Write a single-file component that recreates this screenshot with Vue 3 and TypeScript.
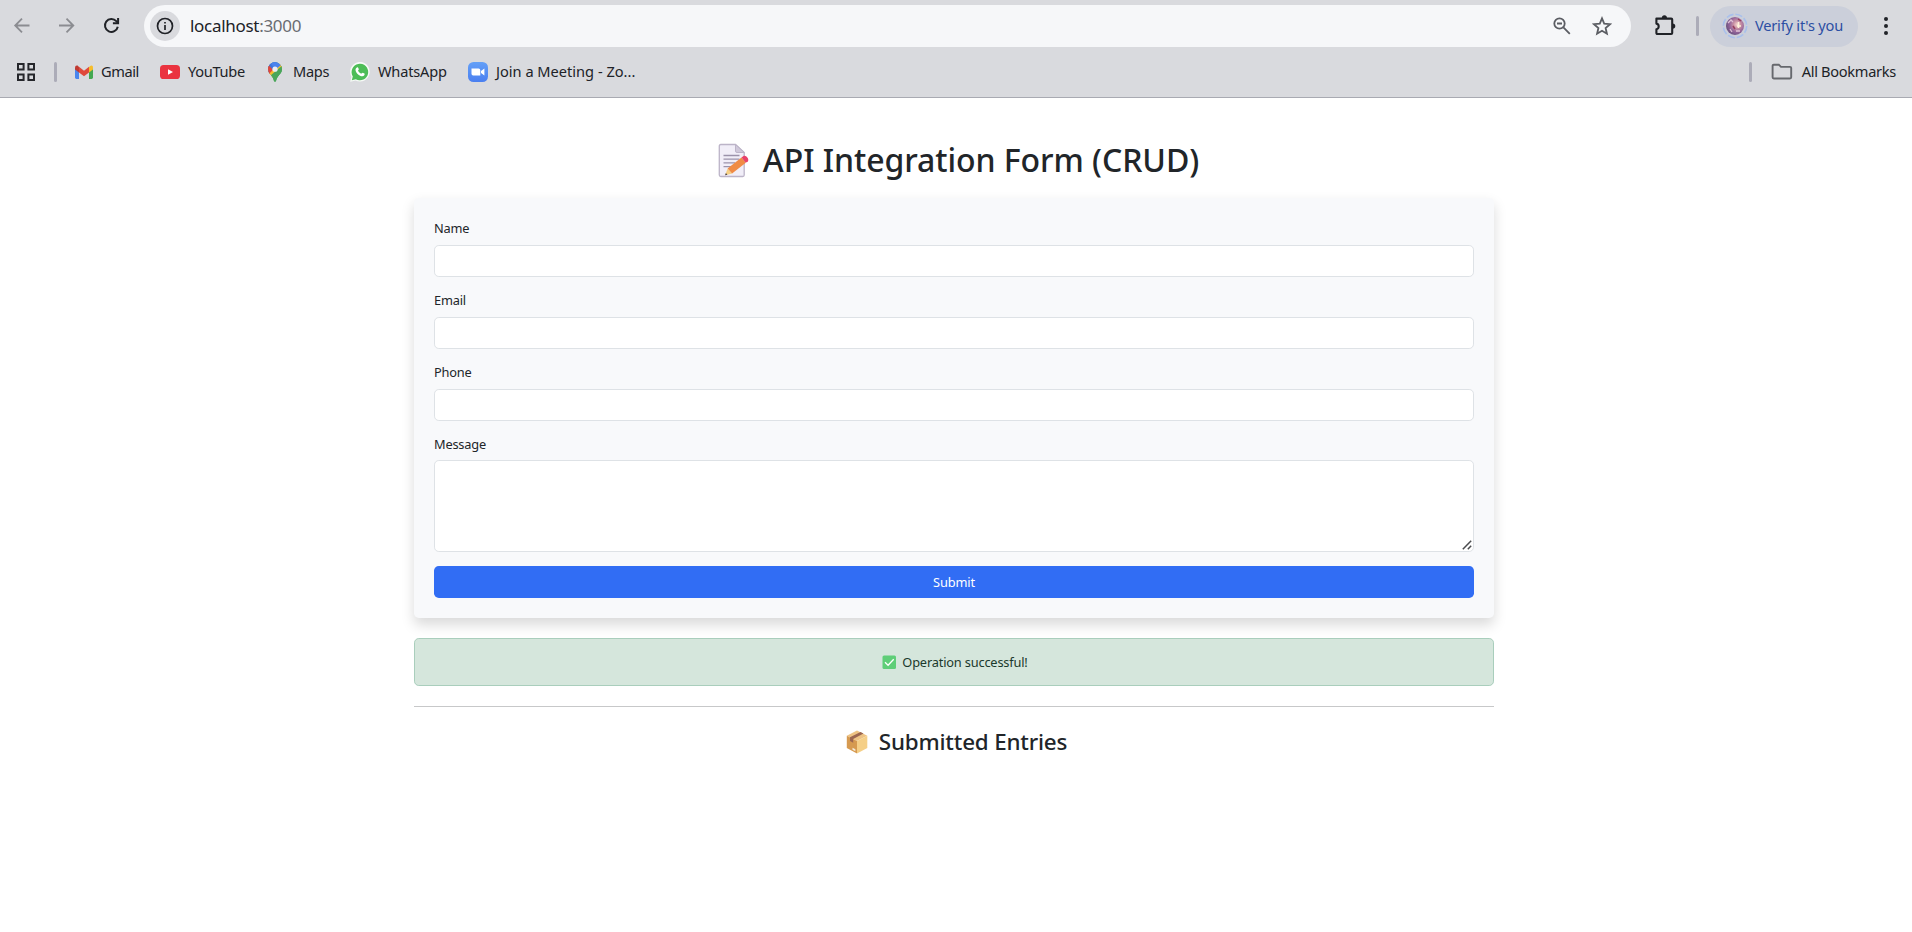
<script setup lang="ts">
import { ref } from 'vue'

interface Field {
  id: string
  label: string
}

const fields: Field[] = [
  { id: 'name', label: 'Name' },
  { id: 'email', label: 'Email' },
  { id: 'phone', label: 'Phone' },
]

const form = ref<Record<string, string>>({ name: '', email: '', phone: '', message: '' })
</script>

<template>
  <div class="window">
    <header class="chrome">
      <div class="toolbar">
        <nav class="nav">
          <svg class="nav-icon muted" viewBox="0 0 18 18"><path d="M16.500 8.500H2.500M9 1.700 2.200 8.500 9 15.300" /></svg>
          <svg class="nav-icon muted" viewBox="0 0 18 18"><path d="M1 8.500h14M8.500 1.700 15.300 8.500 8.500 15.300" /></svg>
          <svg class="nav-icon" viewBox="0 0 18 18">
            <path d="M14.800 9.800A6.500 6.500 0 1 1 13.300 4.100L14.900 5.700" />
            <path d="M15.100 1.100v5.200h-5.200" />
          </svg>
        </nav>
        <div class="omnibox">
          <span class="site-info">
            <svg width="18" height="18" viewBox="0 0 18 18">
              <circle cx="9" cy="9" r="7.5" fill="none" stroke="#202227" stroke-width="1.7" />
              <path d="M9 8.1v5M9 4.9v1.7" stroke="#202227" stroke-width="1.7" />
            </svg>
          </span>
          <span class="url">localhost<span class="port">:3000</span></span>
          <svg class="zoom-icon" width="20" height="20" viewBox="0 0 20 20">
            <circle cx="7.5" cy="7.5" r="5.2" />
            <path d="M5 7.5h5M11.4 11.4l6.4 6.4" />
          </svg>
          <svg class="star-icon" width="20" height="20" viewBox="0 0 20 20">
            <path d="M10 2.4l2.2 5.3 5.8.5-4.400 3.800 1.300 5.700-4.900-3-4.900 3 1.300-5.700L2 8.200l5.800-.5z" />
          </svg>
        </div>
        <svg class="puzzle" width="24" height="24" viewBox="0 0 24 24">
          <path d="M3.4 5.6H18.2Q19.2 5.6 19.2 6.6V20Q19.2 21 18.2 21H4.4Q3.4 21 3.4 20V16.2C6.3 15.9 6.6 11.2 3.4 10.6Z" fill="none" stroke="#202227" stroke-width="2.1" stroke-linejoin="round" />
          <path d="M8.8 5.2a2.6 2.9 0 0 1 5.2 0zM19.6 10.4a2.6 2.6 0 0 1 0 5.4z" fill="#202227" />
        </svg>
        <span class="divider"></span>
        <div class="profile">
          <svg width="26" height="26" viewBox="0 0 26 26">
            <defs>
              <radialGradient id="avatar" cx=".62" cy=".42" r=".6">
                <stop offset="0" stop-color="#f6d6cd" />
                <stop offset=".35" stop-color="#c78fa4" />
                <stop offset=".7" stop-color="#94669b" />
                <stop offset="1" stop-color="#6f5482" />
              </radialGradient>
            </defs>
            <circle cx="13" cy="13" r="11.7" fill="none" stroke="#a9c0ec" stroke-width="1.6" stroke-dasharray="7.2 2" />
            <circle cx="13" cy="13" r="9" fill="url(#avatar)" />
            <path d="M6 10l3-3 2 2M8 16l2 3M14 18h4" stroke="#e0c3d6" stroke-width="1.3" fill="none" />
            <path d="M16.5 9v6M15 13h4" stroke="#fff3dc" stroke-width="1.6" />
            <path d="M11 13l2 3M16 6l3 2" stroke="#96405f" stroke-width="1.5" />
          </svg>
          <span class="verify">Verify it's you</span>
        </div>
        <svg class="dots" width="6" height="20" viewBox="0 0 6 20">
          <circle cx="3" cy="3" r="2" /><circle cx="3" cy="10" r="2" /><circle cx="3" cy="17" r="2" />
        </svg>
      </div>

      <div class="bookmarks">
        <svg class="apps" width="18" height="18" viewBox="0 0 18 18">
          <path d="M1 1h5.6v5.6H1zM11.4 1H17v5.6h-5.6zM1 11.4h5.6V17H1zM11.4 11.4H17V17h-5.6z" fill="none" stroke="#25262b" stroke-width="2" />
        </svg>
        <span class="divider first"></span>
        <div class="bookmark gmail">
          <svg width="20" height="20" viewBox="0 0 20 20">
            <path d="M1 6v9.6Q1 17 2.4 17H5V8z" fill="#4a86ee" />
            <path d="M19 6v9.6q0 1.4-1.4 1.4H15V8z" fill="#44a852" />
            <path d="M15 5l1.6-1.2Q19 3 19 5.4V7.4L15 10.4z" fill="#f6bd2b" />
            <path d="M1 7.4V5.4Q1.200 3 3.600 3.600L5 5v5.400z" fill="#c03a32" />
            <path d="M5 4.800l5 3.900 5-3.900v5.600l-5 3.800-5-3.800z" fill="#e0493c" />
          </svg>
          <span>Gmail</span>
        </div>
        <div class="bookmark youtube">
          <svg width="20" height="20" viewBox="0 0 20 20">
            <rect x="0" y="3" width="20" height="14" rx="3.600" fill="#ea3340" />
            <path d="M8 7.200v5.600l5-2.800z" fill="#fff" />
          </svg>
          <span>YouTube</span>
        </div>
        <div class="bookmark maps">
          <svg width="20" height="20" viewBox="0 0 20 20">
            <defs><clipPath id="pin"><path d="M10 .3a7 7 0 0 1 7 7c0 3.200-2.200 5-4 7.200-1.200 1.600-1.600 3-2 4.500q-1 1.500-2 0c-.4-1.500-.8-2.900-2-4.500-1.800-2.200-4-4-4-7.200a7 7 0 0 1 7-7z" /></clipPath></defs>
            <g clip-path="url(#pin)">
              <rect width="20" height="20" fill="#4aa65a" />
              <path d="M0 14L17 -2H0z" fill="#4b83ee" />
              <path d="M0 0l10 7.300L4 13 0 9z" fill="#e2473b" />
              <path d="M5 0h7L8 8 3.600 3z" fill="#3f76dd" />
              <path d="M3.500 12.500L15.500 0 20 4 6.500 16z" fill="#f5bc2e" />
              <path d="M5 14L18 3v17H5z" fill="#4aa65a" />
              <path d="M5 0h9.500L16 3 10 8z" fill="#4b83ee" />
            </g>
            <circle cx="10" cy="7.200" r="2.600" fill="#e9edf4" />
          </svg>
          <span>Maps</span>
        </div>
        <div class="bookmark whatsapp">
          <svg width="20" height="20" viewBox="0 0 20 20">
            <path d="M.2 19.800l1.300-5A9.800 9.800 0 1 1 5.500 18.500z" fill="#f7faf7" />
            <path d="M1.800 18.200l1-3.800a8.300 8.300 0 1 1 3 2.900z" fill="#4dbd57" />
            <path d="M6.900 5.400c.7-.4 1.200-.1 1.400.5l.5 1.300c.1.600-.9 1.200-.7 1.500.8 1.500 1.700 2.300 3.200 2.900.4.100.9-1 1.400-.9l1.700.9c.6.400.1 1.700-.6 2.200-1.300.9-3.400.2-5-.9-1.700-1.200-3.200-3.100-3.300-4.900 0-1.200.6-2.100 1.400-2.600z" fill="#fff" />
          </svg>
          <span>WhatsApp</span>
        </div>
        <div class="bookmark zoom">
          <svg width="20" height="20" viewBox="0 0 20 20">
            <defs><linearGradient id="zoomBg" x1="0" y1="0" x2="0" y2="1"><stop offset="0" stop-color="#64a0f7" /><stop offset="1" stop-color="#4a7ff0" /></linearGradient></defs>
            <rect width="20" height="20" rx="5.500" fill="url(#zoomBg)" />
            <path d="M3.500 6.500H10.600Q12.300 6.500 12.300 8.200V13.500H5.200Q3.500 13.500 3.500 11.800zM13 9l3.400-2.400v6.800L13 11z" fill="#fff" />
          </svg>
          <span>Join a Meeting - Zo...</span>
        </div>
        <div class="all-bookmarks">
          <span class="divider"></span>
          <svg width="22" height="18" viewBox="0 0 22 18">
            <path d="M2.800 1.700H7.800L10 3.900H19Q20.200 3.900 20.200 5.100V14.300Q20.200 15.500 19 15.500H2.800Q1.600 15.500 1.600 14.300V2.900Q1.600 1.700 2.800 1.700z" fill="none" stroke="#66686d" stroke-width="1.900" />
          </svg>
          <span>All Bookmarks</span>
        </div>
      </div>
    </header>

    <main class="container">
      <h2 class="title">
        <svg width="45" height="36" viewBox="0 0 45 36">
          <path d="M11.800 2.500H26.500L35.200 10.500V33Q35.200 34.500 33.700 34.500H11.800Q10.300 34.500 10.300 33V4Q10.300 2.500 11.800 2.500z" fill="#f1eef8" stroke="#bcb4c8" stroke-width="1.300" />
          <path d="M26.500 2.500V9Q26.500 10.500 28 10.500H35.200z" fill="#cfc8da" stroke="#bcb4c8" />
          <path d="M14.500 13.500H30.500M14.500 17.200H30.500M14.500 20.900H26M14.500 24.600H22" stroke="#9b92aa" stroke-width="1.300" />
          <path d="M18.600 26.500l-2.500 6.800 7-1.700z" fill="#f6d084" />
          <path d="M16.900 31l-.8 2.300 2.300-.6z" fill="#4a4148" />
          <path d="M18.600 26.500L32.500 15.500l4.300 5.300-13.700 10.800z" fill="#f08c45" />
          <path d="M32.500 15.500l2-1.500c2.200-1.400 6 2.800 4.400 5.200l-2.100 1.600z" fill="#e8426a" />
        </svg>
        <span>API Integration Form (CRUD)</span>
      </h2>

      <form class="card" @submit.prevent>
        <div v-for="field in fields" :key="field.id" class="field">
          <label :for="field.id">{{ field.label }}</label>
          <input :id="field.id" v-model="form[field.id]" type="text" />
        </div>
        <div class="field message">
          <label for="message">Message</label>
          <div class="area">
            <textarea id="message" v-model="form.message"></textarea>
            <svg class="grip" width="10" height="10" viewBox="0 0 10 10">
              <path d="M.8 9.200L9.200.8M5.800 9.200L9.200 5.800" stroke="#4a4b4e" stroke-width="1.500" />
            </svg>
          </div>
        </div>
        <button type="submit">Submit</button>
      </form>

      <div class="alert">
        <svg width="18" height="16" viewBox="0 0 18 16">
          <rect x="2.500" y="1.500" width="13.500" height="13.500" rx="1.500" fill="#5fce78" />
          <path d="M5 8.300l3.100 3 5.600-6" fill="none" stroke="#fff" stroke-width="1.300" />
        </svg>
        <span>Operation successful!</span>
      </div>

      <hr />

      <h4 class="entries">
        <svg width="31" height="26" viewBox="0 0 31 26">
          <path d="M16 1.500l10.300 5.200L16 12 5.800 6.700z" fill="#eec384" />
          <path d="M5.800 6.700L16 12v12.500L5.800 18.900z" fill="#d69a50" />
          <path d="M26.300 6.700L16 12v12.500l10.300-5.600z" fill="#f5cf87" />
          <path d="M9 8.300L19.500 3.100l3 1.500L12.200 10v3.800L9 12z" fill="#9b6650" />
          <path d="M11.500 18.700l2.900 1.600v2l-2.900-1.500z" fill="#f3ead7" />
        </svg>
        <span>Submitted Entries</span>
      </h4>
    </main>
  </div>
</template>

<style>
body {
  margin: 0;
  background: #fff;
}
</style>

<style scoped>
.window {
  min-height: 932px;
  font-family: "Noto Sans", "Open Sans", sans-serif;
  color: #212529;
  background: #fff;
}
.window *,
.window {
  box-sizing: border-box;
}
svg {
  display: block;
  flex: none;
}
.chrome {
  height: 98px;
  background: #d9dade;
  border-bottom: 1px solid #a9aab2;
  color: #202227;
}
.toolbar {
  display: flex;
  align-items: center;
  height: 52px;
}
.nav {
  display: flex;
  gap: 27px;
  padding-left: 13px;
  width: 144px;
}
.nav-icon {
  width: 18px;
  height: 18px;
  fill: none;
  stroke: #202227;
  stroke-width: 2;
}
.nav-icon.muted {
  stroke: #8b8c91;
  stroke-width: 1.8;
}
.omnibox {
  display: flex;
  align-items: center;
  width: 1487px;
  height: 42px;
  padding: 0 19px 0 6px;
  border-radius: 21px;
  background: #f6f7f9;
}
.site-info {
  display: grid;
  place-items: center;
  width: 30px;
  height: 30px;
  border-radius: 50%;
  background: #d9dade;
}
.url {
  margin-left: 10px;
  flex: 1;
  font-size: 17px;
  line-height: 24px;
  letter-spacing: -0.3px;
}
.port {
  color: #6a6c72;
}
.zoom-icon,
.star-icon {
  fill: none;
  stroke: #5b5d63;
  stroke-width: 1.8;
}
.star-icon {
  margin-left: 20px;
}
.puzzle {
  margin-left: 22px;
  margin-top: -3px;
}
.divider {
  flex: none;
  width: 3px;
  height: 20px;
  border-radius: 1.5px;
  background: #acacb8;
}
.toolbar .divider {
  margin-left: 19px;
}
.profile {
  display: flex;
  align-items: center;
  width: 148px;
  height: 41px;
  margin-left: 11px;
  padding-left: 12px;
  border-radius: 21px;
  background: #cbcfda;
}
.verify {
  margin-left: 7px;
  padding-bottom: 2px;
  font-size: 14.6px;
  line-height: 20px;
  letter-spacing: -0.2px;
  white-space: nowrap;
  color: #2c4ea3;
}
.dots {
  margin-left: 25px;
  fill: #202227;
}
.bookmarks {
  display: flex;
  align-items: center;
  height: 40px;
  padding: 0 16px 0 17px;
  font-size: 14.6px;
  line-height: 20px;
  white-space: nowrap;
}
.bookmark span,
.all-bookmarks span:last-child {
  padding-bottom: 2px;
}
.divider.first {
  margin: 0 17px 0 19px;
}
.bookmark {
  display: flex;
  align-items: center;
  gap: 8px;
}
.gmail {
  width: 86px;
  gap: 7px;
  letter-spacing: -0.4px;
}
.youtube {
  width: 105px;
  letter-spacing: -0.3px;
}
.maps {
  width: 85px;
  letter-spacing: -0.3px;
}
.whatsapp {
  width: 118px;
  letter-spacing: -0.2px;
}
.all-bookmarks {
  display: flex;
  align-items: center;
  margin-left: auto;
  letter-spacing: -0.3px;
}
.all-bookmarks svg {
  margin: 0 9px 0 19px;
}
.container {
  width: 1080px;
  margin: 0 auto 0 414px;
  padding-top: 42px;
}
h2,
h4 {
  display: flex;
  justify-content: center;
  align-items: center;
  margin: 0;
  font-weight: 500;
}
.title {
  height: 40px;
  gap: 9px;
  font-size: 32px;
  line-height: 38px;
  letter-spacing: -0.07px;
}
.card {
  height: 420px;
  margin-top: 18px;
  padding: 20px;
  border-radius: 4.8px;
  background: #f8f9fb;
  box-shadow: 0 6.4px 12.8px rgba(0, 0, 0, 0.15);
}
.field {
  height: 72px;
  font-size: 12.8px;
  line-height: 19px;
  letter-spacing: -0.2px;
}
.field label {
  display: block;
  height: 27px;
  padding-top: 1px;
}
.field input,
.field textarea {
  display: block;
  width: 100%;
  height: 32px;
  padding: 5px 10px;
  border: 1px solid #dee2e6;
  border-radius: 4.8px;
  background: #fff;
  font: inherit;
  outline: none;
}
.field.message {
  height: 132px;
}
.field.message label {
  height: 26px;
}
.field textarea {
  height: 92px;
  resize: none;
}
.area {
  position: relative;
}
.grip {
  position: absolute;
  right: 2px;
  bottom: 2px;
}
button {
  display: block;
  width: 100%;
  height: 32px;
  padding: 1px 0 0;
  border: 0;
  border-radius: 4.8px;
  background: #316df4;
  color: #fff;
  font: 400 12.8px/19px "Noto Sans", "Open Sans", sans-serif;
  letter-spacing: -0.1px;
}
.alert {
  display: flex;
  justify-content: center;
  align-items: center;
  gap: 4px;
  height: 48px;
  margin-top: 20px;
  border: 1px solid #a9cebc;
  border-radius: 4.8px;
  background: #d5e6dc;
  color: #1b3a2c;
  font-size: 12.8px;
  line-height: 19px;
  letter-spacing: -0.18px;
}
.alert span {
  padding-top: 1px;
}
hr {
  height: 1px;
  margin: 20px 0 0;
  border: 0;
  background: #c7c8c9;
}
.entries {
  margin-top: 21px;
  gap: 7px;
  font-size: 22.4px;
  line-height: 27px;
  letter-spacing: -0.18px;
}
</style>
